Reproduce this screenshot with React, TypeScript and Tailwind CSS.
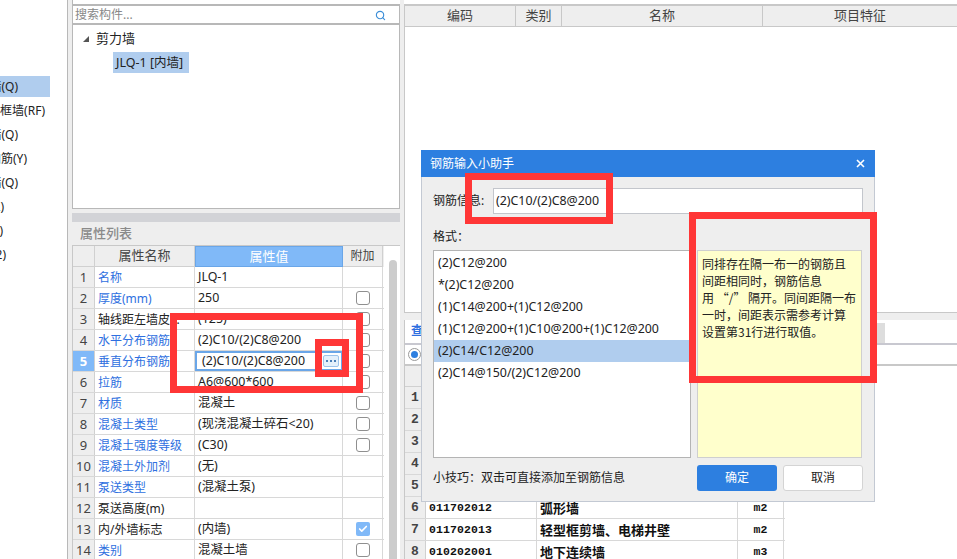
import { Search, Check } from 'lucide-react';

const sideItems = [
  { text: '剪力墙(Q)', pr: 'pr-[32px]', active: true },
  { text: '砌体框墙(RF)', pr: 'pr-[5px]' },
  { text: '砌体墙(Q)', pr: 'pr-[32px]' },
  { text: '砌体加筋(Y)', pr: 'pr-[23px]' },
  { text: '保温墙(Q)', pr: 'pr-[32px]' },
  { text: '暗梁(L)', pr: 'pr-[46px]' },
  { text: '墙垛(E)', pr: 'pr-[47px]' },
  { text: '幕墙(2)', pr: 'pr-[44px]' },
];

const props = [
  { name: '名称', value: 'JLQ-1', blue: true, box: false },
  { name: '厚度(mm)', value: '250', blue: true, box: true },
  { name: '轴线距左墙皮...', value: '(125)', blue: false, box: true },
  { name: '水平分布钢筋', value: '(2)C10/(2)C8@200', blue: true, box: true },
  { name: '垂直分布钢筋', value: '(2)C10/(2)C8@200', blue: true, box: true, editing: true },
  { name: '拉筋', value: 'A6@600*600', blue: true, box: true },
  { name: '材质', value: '混凝土', blue: true, box: true },
  { name: '混凝土类型', value: '(现浇混凝土碎石<20)', blue: true, box: true },
  { name: '混凝土强度等级', value: '(C30)', blue: true, box: true },
  { name: '混凝土外加剂', value: '(无)', blue: true, box: false },
  { name: '泵送类型', value: '(混凝土泵)', blue: true, box: false },
  { name: '泵送高度(m)', value: '', blue: false, box: false },
  { name: '内/外墙标志', value: '(内墙)', blue: false, box: true, checked: true },
  { name: '类别', value: '混凝土墙', blue: true, box: true },
];

const quotaRows = [
  { code: '', name: '', unit: '' },
  { code: '', name: '', unit: '' },
  { code: '', name: '', unit: '' },
  { code: '', name: '', unit: '' },
  { code: '', name: '', unit: '' },
  { code: '011702012', name: '弧形墙', unit: 'm2' },
  { code: '011702013', name: '轻型框剪墙、电梯井壁', unit: 'm2' },
  { code: '010202001', name: '地下连续墙', unit: 'm3' },
];

const formats = [
  '(2)C12@200',
  '*(2)C12@200',
  '(1)C14@200+(1)C12@200',
  '(1)C12@200+(1)C10@200+(1)C12@200',
  '(2)C14/C12@200',
  '(2)C14@150/(2)C12@200',
];

function HelperDialog() {
  return (
    <div className="absolute left-[421px] top-[150px] w-[454px] h-[352px] flex flex-col bg-[#eeeeee] border border-t-0 border-[#c3c9d3] text-[12px] text-[#222]">
      <div className="h-[27px] -mx-px shrink-0 bg-[#2d7fe0] text-white flex items-center justify-between pl-[9px] pr-[10px]">
        <span>钢筋输入小助手</span>
        <svg width="9" height="9" viewBox="0 0 9 9" className="stroke-white" strokeWidth="1.6">
          <path d="M1 1l7 7M8 1l-7 7" />
        </svg>
      </div>
      <div className="flex items-center mt-[11px] ml-[11px]">
        <span className="w-[60px]">钢筋信息:</span>
        <div className="w-[370px] h-[26px] bg-white border border-[#c3c6cc] flex items-center pl-[2px] text-[12.4px]">(2)C10/(2)C8@200</div>
      </div>
      <div className="ml-[11px] mt-[14px] h-[22px] leading-[18px]">格式：</div>
      <div className="flex ml-[11px] gap-[6px]">
        <div className="w-[258px] h-[208px] bg-white border border-[#b4b4b4] pt-px text-[12.4px]">
          {formats.map((f, i) => (
            <div key={f} className={`h-[22px] pl-[4px] flex items-center ${i === 4 ? 'bg-[#b0cdee]' : ''}`}>{f}</div>
          ))}
        </div>
        <div className="w-[165px] h-[208px] bg-[#ffffcc] border border-[#cfcfcf] pl-[4px] pt-[4px] leading-[17px] whitespace-nowrap font-['Noto_Sans_CJK_SC',sans-serif]">
          同排存在隔一布一的钢筋且
          <br />
          间距相同时，钢筋信息
          <br />
          用 “/” 隔开。同间距隔一布
          <br />
          一时，间距表示需参考计算
          <br />
          设置第31行进行取值。
        </div>
      </div>
      <div className="flex items-center ml-[11px] mt-[7px]">
        <span className="w-[264px]">小技巧：双击可直接添加至钢筋信息</span>
        <button className="w-[80px] h-[26px] rounded-[3px] bg-[#2d7fe0] text-white">确定</button>
        <button className="ml-[6px] w-[80px] h-[26px] rounded-[3px] bg-white border border-[#d4d4d4]">取消</button>
      </div>
    </div>
  );
}

export default function App() {
  return (
    <div className="relative w-[957px] h-[559px] overflow-hidden bg-white flex font-['Noto_Sans','Noto_Sans_CJK_SC',sans-serif] text-[12px] text-[#222]">
      {/* left component type list */}
      <div className="w-[67px] shrink-0 pt-[76px] bg-white overflow-hidden">
        {sideItems.map((item) => (
          <div key={item.text} className="w-[67px] h-[24px]">
            <div className={`w-[50px] h-[21px] flex items-center justify-end whitespace-nowrap overflow-hidden ${item.pr} ${item.active ? 'bg-[#b0cdee]' : ''}`}>
              <span className="shrink-0">{item.text}</span>
            </div>
          </div>
        ))}
      </div>

      {/* middle: tree + props */}
      <div className="w-[337px] h-[559px] shrink-0 flex bg-[#eeeeee] border-l border-[#b8b8b8] pl-[4px] pr-[4px] overflow-hidden">
        <div className="w-[328px] flex flex-col min-h-0">
          <div className="h-[4px] shrink-0 bg-white border-l border-[#b8b8b8]" />
          <div className="h-[21px] shrink-0 bg-white border-x border-y-2 border-[#b8b8b8] flex items-center justify-between pl-[2px] pt-px pr-[13px] text-[#888]">
            <span>搜索构件...</span>
            <Search size={11} strokeWidth={2.5} className="text-[#3d8fd8]" />
          </div>
          <div className="h-[184px] shrink-0 bg-white border-x border-b border-[#b8b8b8] relative">
            <div className="flex items-center h-[24px] mt-[2px] pl-[10px]">
              <span className="w-0 h-0 border-l-[6px] border-l-transparent border-b-[6px] border-b-[#555]" />
              <span className="ml-[7px] text-[13px]">剪力墙</span>
            </div>
            <div className="ml-[40px] mt-[1px] w-[76px] h-[21px] bg-[#b0cdee] flex items-center pl-[3px] pt-px text-[12.5px] whitespace-nowrap">JLQ-1 [内墙]</div>
          </div>
          <div className="h-[4px] shrink-0" />
          <div className="h-[9px] shrink-0 bg-[#d2d3d7]" />
          <div className="h-[24px] shrink-0 flex items-center pl-[8px] text-[13px] text-[#8a8a8a] font-medium border-b border-[#c8c8c8]">属性列表</div>
          <div className="flex-1 min-h-0 flex bg-white border-l border-[#c8c8c8] overflow-hidden">
            <div className="w-[311px] shrink-0">
              <div className="flex h-[21px] bg-[#eeeeee] text-[13px] text-[#444]">
                <div className="w-[22px] border-r border-b border-[#d0d0d0]" />
                <div className="w-[100px] border-r border-b border-[#d0d0d0] flex items-center justify-center">属性名称</div>
                <div className="w-[148px] bg-[#80b9f8] text-white border border-[#6aa6e8] flex items-center justify-center">属性值</div>
                <div className="w-[40px] border-b border-r border-[#d0d0d0] flex items-center justify-center text-[12px]">附加</div>
              </div>
              {props.map((p, i) => (
                <div key={p.name} className="flex h-[21px] border-b border-[#d8d8d8]">
                  <div className={`w-[22px] pt-px flex items-center justify-center border-r border-[#d0d0d0] text-[13px] ${p.editing ? 'bg-[#80b9f8] text-white font-bold' : 'bg-[#eeeeee] text-[#444]'}`}>{i + 1}</div>
                  <div className={`w-[100px] pl-[3px] pt-px flex items-center border-r border-[#d8d8d8] whitespace-nowrap overflow-hidden ${p.blue ? 'text-[#2e6fe0]' : 'text-[#222]'}`}>{p.name}</div>
                  {p.editing ? (
                    <div className="w-[148px] flex items-center justify-between border-2 border-[#6aa6e8] pl-[5px] pr-[2px] text-[12.4px]">
                      <span>{p.value}</span>
                      <span className="w-[16px] h-[12px] rounded-[2px] border border-[#9cc3ea] bg-[#e4f0fb] flex items-center justify-center">
                        <svg width="10" height="2" viewBox="0 0 10 2" className="fill-[#4a7fb8]">
                          <rect x="0" y="0" width="2" height="2" />
                          <rect x="4" y="0" width="2" height="2" />
                          <rect x="8" y="0" width="2" height="2" />
                        </svg>
                      </span>
                    </div>
                  ) : (
                    <div className="w-[148px] pl-[3px] pt-px flex items-center border-r border-[#d8d8d8] whitespace-nowrap text-[12.4px]">{p.value}</div>
                  )}
                  <div className="w-[40px] flex items-center justify-center border-r border-[#d8d8d8]">
                    {p.box && (
                      p.checked ? (
                        <span className="w-[14px] h-[14px] rounded-[2px] bg-[#80b9f8] flex items-center justify-center">
                          <Check size={10} strokeWidth={4} className="text-white" />
                        </span>
                      ) : (
                        <span className="w-[14px] h-[14px] rounded-[3px] border border-[#8f8f8f] bg-white" />
                      )
                    )}
                  </div>
                </div>
              ))}
            </div>
            <div className="flex-1 pl-[5px] pt-[14px]">
              <div className="w-[8px] h-[320px] rounded-full bg-[#cccccc]" />
            </div>
          </div>
        </div>
      </div>

      {/* right: list + quota table */}
      <div className="flex-1 min-w-0 overflow-hidden flex flex-col bg-[#eeeeee]">
        <div className="h-[4px] shrink-0 bg-white" />
        <div className="h-[309px] shrink-0 bg-white border-t-2 border-l border-b border-[#c8c8c8]">
          <div className="flex h-[21px] bg-[#eeeeee] border-b border-[#c8c8c8] text-[#444] text-[13px]">
            <div className="w-[111px] border-r border-[#c8c8c8] flex items-center justify-center">编码</div>
            <div className="w-[46px] border-r border-[#c8c8c8] flex items-center justify-center">类别</div>
            <div className="w-[201px] border-r border-[#c8c8c8] flex items-center justify-center">名称</div>
            <div className="flex-1 flex items-center justify-center">项目特征</div>
          </div>
        </div>
        <div className="h-[7px] shrink-0" />
        <div className="flex-1 bg-white border-l border-[#c8c8c8] flex flex-col min-h-0">
          <div className="h-[25px] shrink-0 flex items-end border-b-2 border-[#c8c8d0]">
            <div className="w-[18px] h-[24px] flex items-center pl-[6px] text-[#2e6fe0] font-bold">查</div>
            <div className="ml-[382px] w-[80px] h-[20px] bg-[#dddddd]" />
          </div>
          <div className="h-[21px] shrink-0 flex items-center pl-[3px] border-b-2 border-[#c8c8c8]">
            <span className="w-[13px] h-[13px] rounded-full border border-[#999] flex items-center justify-center">
              <span className="w-[7px] h-[7px] rounded-full bg-[#2d7fe0]" />
            </span>
          </div>
          <div className="h-[21px] shrink-0 w-[21px] bg-[#eeeeee] border-b border-[#d0d0d0]" />
          {quotaRows.map((r, i) => (
            <div key={i} className="flex h-[22px] shrink-0 w-[380px] border-b border-[#d8d8d8] font-['Liberation_Mono','Noto_Sans_CJK_SC',monospace] font-bold text-[#111]">
              <div className="w-[21px] bg-[#eeeeee] border-r border-[#d0d0d0] flex items-center justify-center text-[#444] text-[13px]">{i + 1}</div>
              <div className="w-[111px] pl-[3px] flex items-center border-r border-[#d8d8d8] text-[11.5px] tracking-[0.1px]">{r.code}</div>
              <div className="w-[201px] pl-[3px] flex items-center border-r border-[#d8d8d8] text-[13px] font-['Noto_Sans_CJK_SC',sans-serif]">{r.name}</div>
              <div className="w-[46px] flex items-center justify-center border-r border-[#d8d8d8] text-[11.5px]">{r.unit}</div>
            </div>
          ))}
        </div>
      </div>

      <HelperDialog />

      {/* red annotation frames drawn over the screenshot */}
      <div className="absolute left-[170px] top-[313px] w-[193px] h-[80px] border-[7px] border-[#ff3636]" />
      <div className="absolute left-[315px] top-[339px] w-[34px] h-[38px] border-[7px] border-[#ff3636]" />
      <div className="absolute left-[465px] top-[173px] w-[148px] h-[51px] border-[7px] border-[#ff3636]" />
      <div className="absolute left-[689px] top-[212px] w-[188px] h-[171px] border-[7px] border-[#ff3636]" />
    </div>
  );
}
